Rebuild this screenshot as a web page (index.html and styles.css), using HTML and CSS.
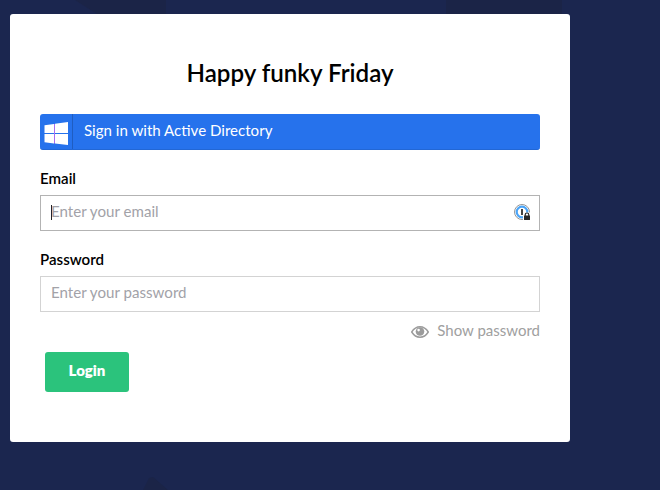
FILE: index.html
```html
<!DOCTYPE html>
<html lang="en">
<head>
<meta charset="utf-8">
<title>Login</title>
<link rel="stylesheet" href="styles.css">
</head>
<body>
<svg class="backdrop" width="660" height="490" viewBox="0 0 660 490" aria-hidden="true">
  <path d="M75 0H166V14H97ZM446 0H562V14H446ZM143 490L149 478L153 477L168 490Z"/>
</svg>
<main class="card">
  <h1 class="title">Happy funky Friday</h1>
  <button class="provider" type="button">
    <span class="provider-icon">
      <svg width="24" height="24" viewBox="0 0 24 24">
        <path fill="#fff" d="M.5 3.2L10 2V11H.5ZM11 1.8L24 0V11H11ZM.5 12H10V21.5L.5 20.3ZM11 12H24V23L11 21.5Z"/>
        <path fill="#a96df2" d="M10 2H11V21.5H10Z"/>
      </svg>
    </span>
    <span class="provider-label">Sign in with Active Directory</span>
  </button>
  <label class="label" for="email">Email</label>
  <div class="field field-focused">
    <span class="caret"></span>
    <input id="email" class="input" type="text" placeholder="Enter your email">
    <svg class="manager" width="18" height="18" viewBox="0 0 18 18">
      <circle cx="8" cy="8" r="7.5" fill="#fff" stroke="#959595" stroke-width="1"/>
      <circle cx="8" cy="8" r="5.3" fill="none" stroke="#4ba5f8" stroke-width="2.2"/>
      <rect x="7" y="5" width="2" height="6" fill="#444"/>
      <path d="M9 8.5H18V18H9Z" fill="#fff"/>
      <path d="M11.2 12V10.8A1.8 1.8 0 0 1 14.8 10.8V12" fill="none" stroke="#292929" stroke-width="1.2"/>
      <rect x="10" y="11.5" width="6" height="4.5" rx=".5" fill="#292929"/>
    </svg>
  </div>
  <label class="label" for="password">Password</label>
  <div class="field">
    <input id="password" class="input" type="password" placeholder="Enter your password">
  </div>
  <div class="show">
    <svg width="18" height="12" viewBox="0 0 18 12">
      <path d="M.7 6Q4 .8 9 .8T17.3 6Q14 11.2 9 11.2T.7 6Z" fill="#fff" stroke="#9b9b9b" stroke-width="1.4"/>
      <circle cx="9" cy="5.5" r="4.3" fill="#9b9b9b"/>
      <circle cx="7.6" cy="4.1" r="1.3" fill="#fff"/>
    </svg>
    <span>Show password</span>
  </div>
  <button class="login" type="button">Login</button>
</main>
</body>
</html>
```
FILE: styles.css
```css
* { box-sizing: border-box; }
body {
  margin: 0;
  padding: 14px 10px;
  height: 490px;
  overflow: hidden;
  background: #1b264f;
  font: 15px/20px Lato, sans-serif;
  color: #000;
}
.backdrop { position: absolute; inset: 0; z-index: -1; fill: #1b2447; }
.card {
  width: 560px;
  height: 428px;
  padding: 44px 30px 0;
  background: #fff;
  border-radius: 3px;
}
.title {
  margin: 0 0 26px;
  font-size: 24.15px;
  line-height: 30px;
  font-weight: 600;
  text-align: center;
}
button { border: 0; font: inherit; color: #fff; }
.provider {
  display: flex;
  width: 100%;
  height: 36px;
  padding: 0;
  background: #2672ec;
  border-bottom: 1px solid #2267d5;
  border-radius: 3px;
  text-align: left;
}
.provider-icon {
  width: 33px;
  height: 35px;
  padding: 8px 0 0 4px;
  border-right: 1px solid #1f5dc1;
}
.provider-icon svg { display: block; }
.provider-label { padding: 6px 0 0 11px; font-size: 15.08px; }
.label {
  display: block;
  margin: 18px 0 7px;
  font-size: 15.1px;
  font-weight: 600;
}
.field {
  display: flex;
  align-items: center;
  height: 36px;
  padding: 0 7px 0 10px;
  border: 1px solid #d3d3d3;
}
.field-focused { border-color: #b3b3b3; }
.caret { width: 1px; height: 15px; margin: 0 -1px 2px 0; background: #222; }
.input {
  flex: 1;
  min-width: 0;
  padding: 0 0 4px;
  border: 0;
  background: none;
  font: inherit;
  font-size: 15.12px;
}
.input::placeholder { color: #a2a2a8; opacity: 1; }
.show {
  display: flex;
  justify-content: flex-end;
  align-items: flex-start;
  gap: 8px;
  margin-top: 8px;
  color: #a0a0a0;
}
.show svg { margin-top: 6px; }
.login {
  display: block;
  width: 84px;
  height: 40px;
  margin: 12px 0 0 5px;
  padding: 0 0 4px;
  background: #2bc37c;
  border-radius: 3px;
  font-weight: 800;
}
```
